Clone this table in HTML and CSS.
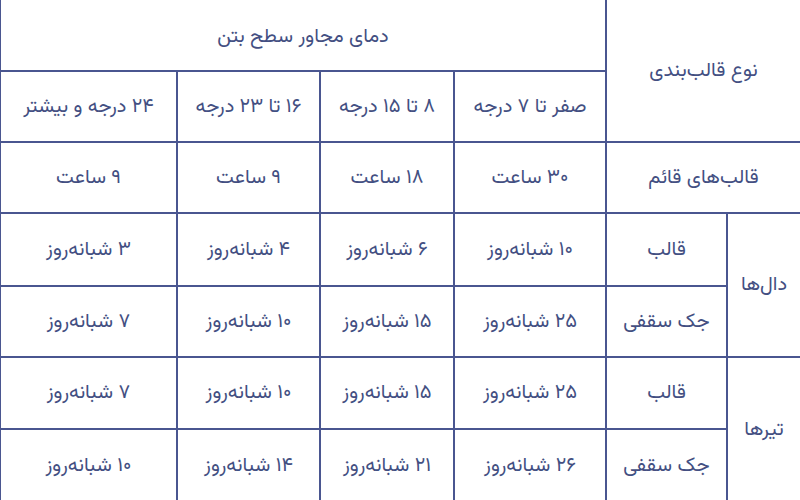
FILE: index.html
```html
<!DOCTYPE html>
<html lang="fa" dir="rtl">
<head>
<meta charset="utf-8">
<link rel="stylesheet" href="styles.css">
</head>
<body>
<table class="grid">
  <colgroup>
    <col class="c-f"><col class="c-e"><col class="c-d"><col class="c-c"><col class="c-b"><col class="c-a">
  </colgroup>
  <tr class="r1">
    <td colspan="2" rowspan="2">نوع قالب‌بندی</td>
    <td colspan="4" class="top">دمای مجاور سطح بتن</td>
  </tr>
  <tr class="r2">
    <td>صفر تا ۷ درجه</td>
    <td>۸ تا ۱۵ درجه</td>
    <td>۱۶ تا ۲۳ درجه</td>
    <td>۲۴ درجه و بیشتر</td>
  </tr>
  <tr class="r3">
    <td colspan="2">قالب‌های قائم</td>
    <td>۳۰ ساعت</td>
    <td>۱۸ ساعت</td>
    <td>۹ ساعت</td>
    <td>۹ ساعت</td>
  </tr>
  <tr class="r4">
    <td rowspan="2">دال‌ها</td>
    <td>قالب</td>
    <td>۱۰ شبانه‌روز</td>
    <td>۶ شبانه‌روز</td>
    <td>۴ شبانه‌روز</td>
    <td>۳ شبانه‌روز</td>
  </tr>
  <tr class="r5">
    <td>جک سقفی</td>
    <td>۲۵ شبانه‌روز</td>
    <td>۱۵ شبانه‌روز</td>
    <td>۱۰ شبانه‌روز</td>
    <td>۷ شبانه‌روز</td>
  </tr>
  <tr class="r6">
    <td rowspan="2">تیرها</td>
    <td>قالب</td>
    <td>۲۵ شبانه‌روز</td>
    <td>۱۵ شبانه‌روز</td>
    <td>۱۰ شبانه‌روز</td>
    <td>۷ شبانه‌روز</td>
  </tr>
  <tr class="r7">
    <td>جک سقفی</td>
    <td>۲۶ شبانه‌روز</td>
    <td>۲۱ شبانه‌روز</td>
    <td>۱۴ شبانه‌روز</td>
    <td>۱۰ شبانه‌روز</td>
  </tr>
</table>
</body>
</html>
```
FILE: styles.css
```css
html, body {
  margin: 0;
  padding: 0;
  background: #ffffff;
}
body {
  width: 800px;
  height: 500px;
  overflow: hidden;
  font-family: "Vazirmatn", "Noto Sans Arabic", "DejaVu Sans", sans-serif;
  color: #434f82;
}
.grid {
  width: 800px;
  table-layout: fixed;
  border-collapse: collapse;
  border-top-style: hidden;
  border-right-style: hidden;
  border-left: 2px solid #4a5690;
}
.grid td {
  border: 2px solid #4a5690;
  text-align: center;
  vertical-align: middle;
  padding: 0;
  font-size: 20px;
  line-height: 1;
}
.grid td.top {
  padding-top: 4px;
}
.c-f { width: 73px; }
.c-e { width: 121px; }
.c-d { width: 152px; }
.c-c { width: 134px; }
.c-b { width: 143px; }
.c-a { width: 177px; }
.r1 { height: 71px; }
.r2 { height: 71px; }
.r3 { height: 71px; }
.r4 { height: 73px; }
.r5 { height: 71px; }
.r6 { height: 72px; }
.r7 { height: 74px; }
```
